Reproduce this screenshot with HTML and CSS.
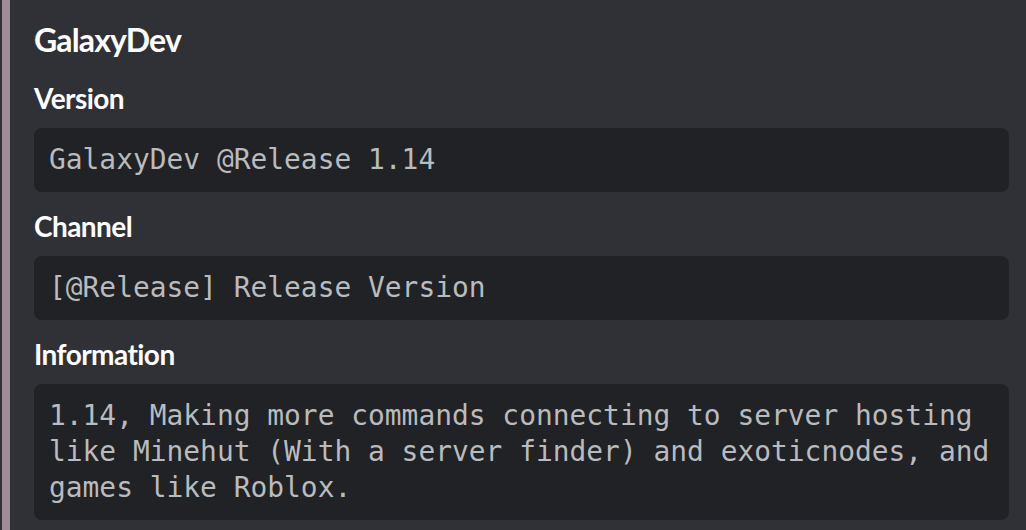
FILE: index.html
```html
<!DOCTYPE html>
<html>
<head>
<meta charset="utf-8">
<link rel="stylesheet" href="styles.css">
</head>
<body>
<div class="embed">
  <div class="title">GalaxyDev</div>
  <div class="fields">
    <div class="field">
      <div class="name">Version</div>
      <pre class="code">GalaxyDev @Release 1.14</pre>
    </div>
    <div class="field">
      <div class="name">Channel</div>
      <pre class="code">[@Release] Release Version</pre>
    </div>
    <div class="field">
      <div class="name">Information</div>
      <pre class="code">1.14, Making more commands connecting to server hosting
like Minehut (With a server finder) and exoticnodes, and
games like Roblox.</pre>
    </div>
  </div>
</div>
</body>
</html>
```

FILE: styles.css
```css
html, body {
  margin: 0;
  padding: 0;
  background: #2f3136;
  overflow: hidden;
}
.embed {
  margin-left: 2px;
  border-left: 8px solid #a08c98;
  background: #2f3136;
  padding: 18px 17px 32px 24px;
  font-family: "Lato", "Open Sans", sans-serif;
}
.title {
  color: #ffffff;
  font-size: 32px;
  font-weight: 700;
  line-height: 44px;
  letter-spacing: -0.85px;
}
.fields {
  display: flex;
  flex-direction: column;
  gap: 16px;
  margin-top: 18px;
}
.name {
  color: #ffffff;
  font-size: 28px;
  font-weight: 700;
  line-height: 36px;
  letter-spacing: -0.55px;
}
.code {
  margin: 12px 0 0 0;
  background: #202225;
  border-radius: 8px;
  padding: 14px 15px;
  color: #b9bbbe;
  font-family: "DejaVu Sans Mono", monospace;
  font-size: 27.9px;
  line-height: 36px;
  white-space: pre;
}
```
